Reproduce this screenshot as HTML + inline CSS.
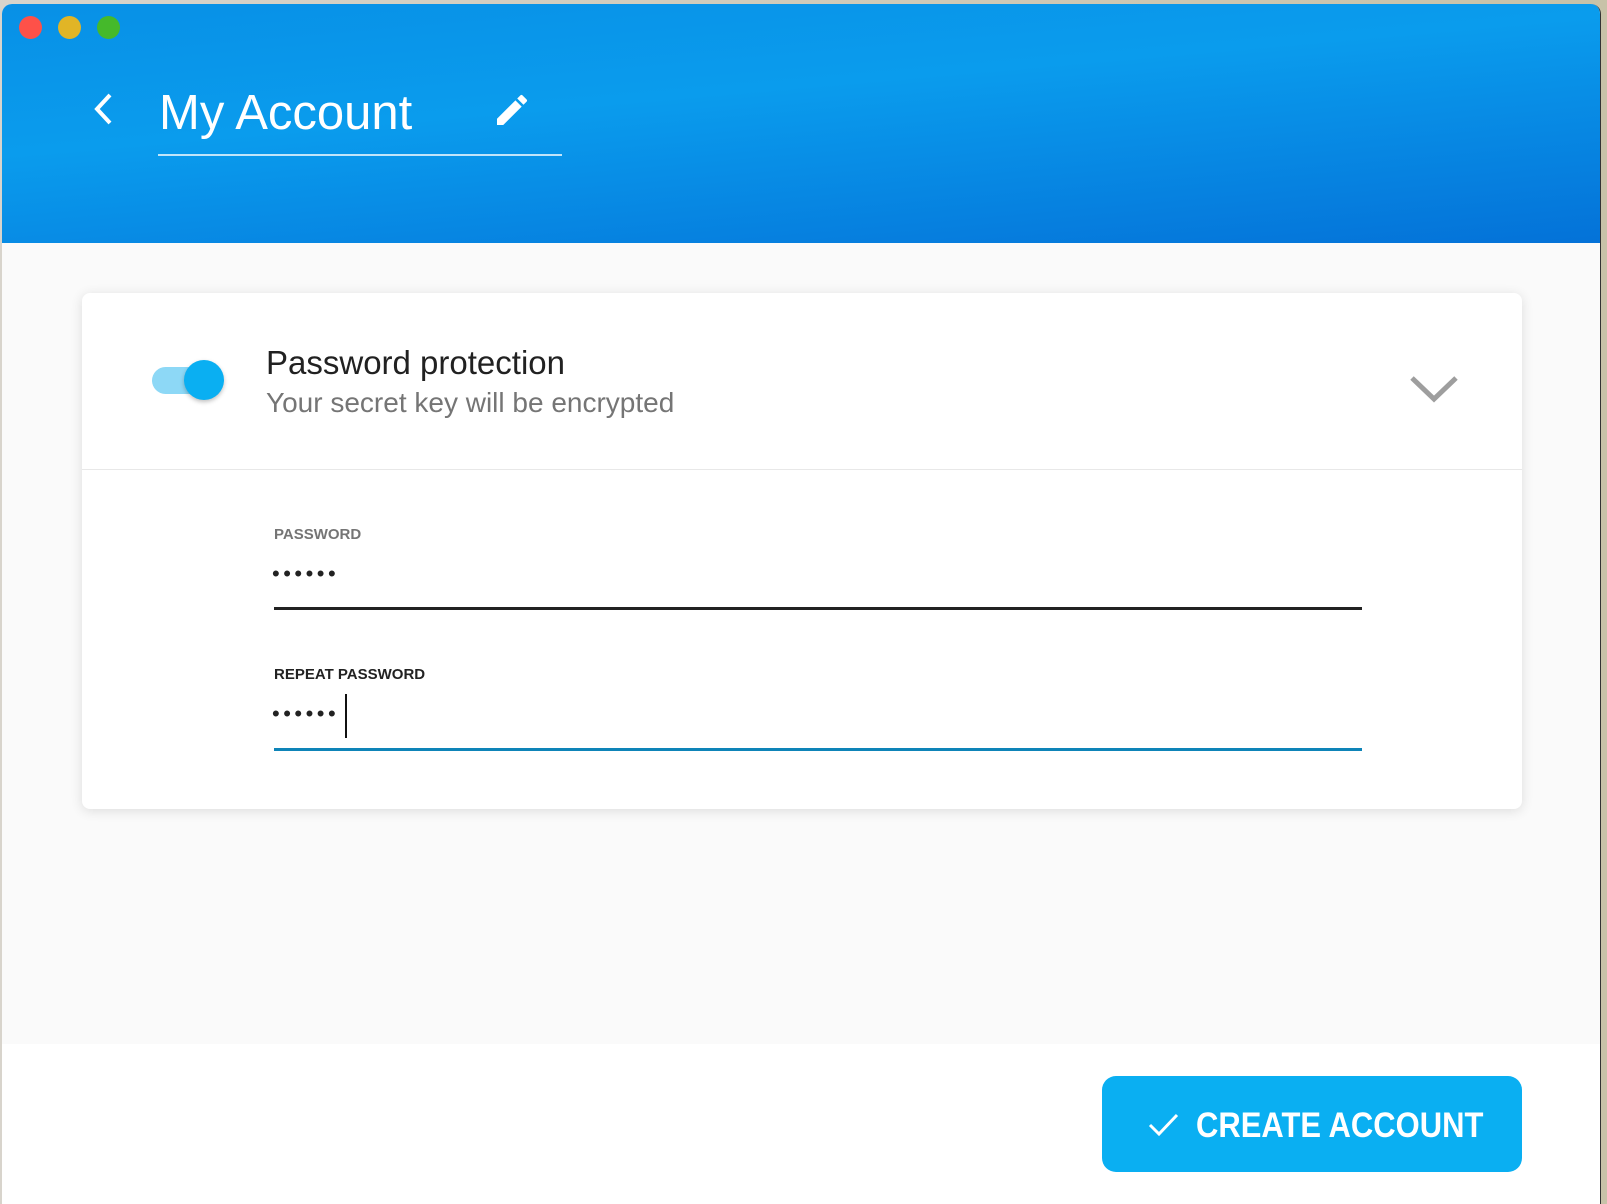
<!DOCTYPE html>
<html><head><meta charset="utf-8"><style>
*{margin:0;padding:0;box-sizing:border-box}
html,body{width:1607px;height:1201px;overflow:hidden;background:linear-gradient(90deg,#d8d4cc,#c8c2a8);font-family:"Liberation Sans",sans-serif}
.win{position:absolute;left:2px;top:4px;width:1599px;height:1200px;background:#fff;border-radius:10px 10px 0 0;overflow:hidden;border-right:1px solid #333}
.hdr{position:absolute;left:0;top:0;width:100%;height:239px;background:linear-gradient(175deg,#0890e6 0%,#0a9ced 40%,#0472d8 100%)}
.dot{position:absolute;top:12px;width:23px;height:23px;border-radius:50%}
.title{position:absolute;left:157px;top:79px;color:#fff;font-size:49px;line-height:60px}
.uline{position:absolute;left:156px;top:150px;width:404px;height:2px;background:rgba(255,255,255,.75)}
.body{position:absolute;left:0;top:239px;width:100%;height:801px;background:#fafafa}
.card{position:absolute;left:80px;top:289px;width:1440px;height:516px;background:#fff;border-radius:8px;box-shadow:0 2px 12px rgba(0,0,0,.12)}
.div{position:absolute;left:0;top:176px;width:100%;height:1px;background:#e8e8e8}
.lbl{position:absolute;left:192px;font-size:15px;font-weight:bold;letter-spacing:0}
.dots{position:absolute;left:190px;font-size:22px;letter-spacing:3.5px;color:#222}
.btn{position:absolute;left:1100px;top:1072px;width:420px;height:96px;background:#0aaff2;border-radius:14px}
</style></head><body>
<div class="win">
<div class="hdr">
<div class="dot" style="left:17px;background:#fe5149"></div>
<div class="dot" style="left:56px;background:#e1b526"></div>
<div class="dot" style="left:95px;background:#45b92b"></div>
<svg style="position:absolute;left:88px;top:88px" width="26" height="34" viewBox="0 0 26 34"><path d="M20 3 L7 17 L20 31" fill="none" stroke="#fff" stroke-width="4"/></svg>
<div class="title">My Account</div>
<svg style="position:absolute;left:490px;top:86px" width="40" height="40" viewBox="0 0 24 24"><path fill="#fff" d="M3 17.25V21h3.75L17.81 9.94l-3.75-3.75L3 17.25zM20.71 7.04a1 1 0 0 0 0-1.41l-2.34-2.34a1 1 0 0 0-1.41 0l-1.83 1.83 3.75 3.75 1.83-1.83z"/></svg>
<div class="uline"></div>
</div>
<div class="body"></div>
<div class="card">
<div style="position:absolute;left:70px;top:74px;width:65px;height:27px;border-radius:14px;background:#8dd8f6"></div>
<div style="position:absolute;left:102px;top:67px;width:40px;height:40px;border-radius:50%;background:#0aaff2;box-shadow:0 2px 4px rgba(0,0,0,.25)"></div>
<div style="position:absolute;left:184px;top:51px;font-size:33px;color:#212121">Password protection</div>
<div style="position:absolute;left:184px;top:94px;font-size:28px;color:#757575">Your secret key will be encrypted</div>
<svg style="position:absolute;left:1327px;top:80px" width="50" height="34" viewBox="0 0 50 34"><path d="M3 5 L25 26 L47 5" fill="none" stroke="#9e9e9e" stroke-width="5"/></svg>
<div class="div"></div>
<div class="lbl" style="top:233px;color:#757575">PASSWORD</div>
<div class="dots" style="top:268px">••••••</div>
<div style="position:absolute;left:192px;top:314px;width:1088px;height:3px;background:#222"></div>
<div class="lbl" style="top:373px;color:#222">REPEAT PASSWORD</div>
<div class="dots" style="top:408px">••••••</div>
<div style="position:absolute;left:263px;top:401px;width:2px;height:44px;background:#111"></div>
<div style="position:absolute;left:192px;top:455px;width:1088px;height:3px;background:#0e84b8"></div>
</div>
<div class="btn">
<svg style="position:absolute;left:46px;top:36px" width="32" height="26" viewBox="0 0 32 26"><path d="M2 13 L11 22 L29 3" fill="none" stroke="#fff" stroke-width="3"/></svg>
<div style="position:absolute;left:94px;top:30px;color:#fff;font-weight:bold;font-size:35px;transform:scaleX(.885);transform-origin:left;white-space:nowrap;line-height:40px">CREATE ACCOUNT</div>
</div>
</div>
</body></html>
